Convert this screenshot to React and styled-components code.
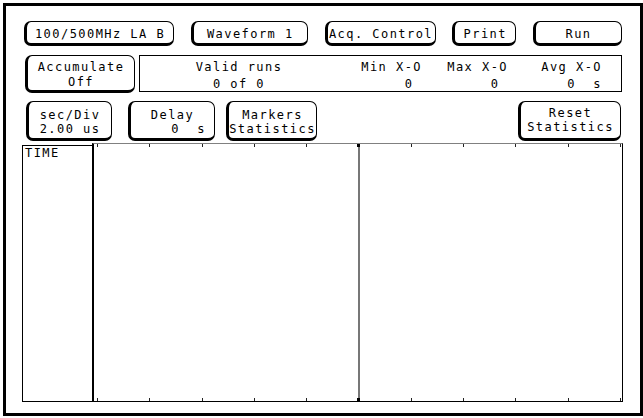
import React from "react";
import styled, { createGlobalStyle } from "styled-components";

const GlobalStyle = createGlobalStyle`
  html, body { margin: 0; padding: 0; background: #fff; }
  body { font-family: "DejaVu Sans Mono", "Liberation Mono", monospace; }
`;

const Screen = styled.div`
  box-sizing: border-box;
  margin: 3px 0 0 3px;
  width: 640px;
  height: 413px;
  border: 3px solid #000;
  background: #fff;
  padding: 15px 17px 0 16px;
  display: flex;
  flex-direction: column;
  font-family: "DejaVu Sans Mono", "Liberation Mono", monospace;
  font-size: 12px;
  line-height: 14px;
  letter-spacing: 1.45px;
  color: #000;
`;

const TopBar = styled.div`
  display: flex;
  justify-content: space-between;
  height: 25px;
  margin: 0 1px 0 2px;
`;

const StatusRow = styled.div`
  display: flex;
  gap: 4px;
  margin: 9px 1px 0 3px;
`;

const ScaleRow = styled.div`
  display: flex;
  margin: 8px 2px 0 4px;
`;

const Key = styled.div`
  box-sizing: border-box;
  flex: none;
  width: ${(p) => p.$w}px;
  height: ${(p) => p.$h}px;
  margin-left: ${(p) => (p.$ml === "auto" ? "auto" : `${p.$ml || 0}px`)};
  border: 1px solid #000;
  border-left-width: 3px;
  border-bottom-width: 3px;
  border-radius: 7px;
  display: flex;
  flex-direction: column;
  justify-content: center;
  padding-top: ${(p) => (p.$pt == null ? 3 : p.$pt)}px;
  line-height: ${(p) => p.$lh || 14}px;
  white-space: pre;
  text-align: center;
  background: #fff;
`;

const KeyLine = styled.span`
  display: block;
  text-align: ${(p) => p.$align || "center"};
  padding-right: ${(p) => (p.$align === "right" ? 8 : 0)}px;
`;

const Readout = styled.div`
  box-sizing: border-box;
  flex: 1;
  height: 37px;
  border: 1px solid #000;
  display: grid;
  grid-template-columns: 198px 84px 86px 94px;
  grid-auto-rows: 17px;
  align-content: start;
  padding-top: 3px;
  line-height: 17px;
  white-space: pre;
`;

const Cell = styled.div`
  text-align: ${(p) => p.$align || "right"};
`;

const Display = styled.div`
  display: flex;
  height: 259px;
  margin-top: 2px;
`;

const TimePanel = styled.div`
  box-sizing: border-box;
  width: 70px;
  margin-top: 2px;
  border: 1px solid #000;
  border-right: none;
  padding-left: 2px;
  line-height: 14px;
`;

const Plot = styled.div`
  box-sizing: border-box;
  flex: 1;
  border-left: 2px solid #000;
  border-top: 1px solid #808080;
  border-right: 1px solid #000;
  border-bottom: 1px solid #000;
  svg { display: block; }
`;

const ticks = Array.from({ length: 11 }, (_, i) => Math.round(3 + i * 52.3));

function Grid() {
  return (
    <svg width="528" height="257" viewBox="0 0 528 257">
      <rect x="264" y="0" width="2" height="257" fill="#777" />
      {ticks.map((x, i) =>
        i === 5 ? (
          <g key={x}>
            <rect x={263} y={0} width={3} height={3} fill="#000" />
            <rect x={263} y={254} width={3} height={3} fill="#000" />
          </g>
        ) : (
          <g key={x}>
            <rect x={x} y={0} width={1} height={3} fill="#222" />
            <rect x={x} y={254} width={1} height={3} fill="#222" />
          </g>
        )
      )}
    </svg>
  );
}

export default function App() {
  return (
    <>
      <GlobalStyle />
      <Screen>
        <TopBar>
          <Key $w={150} $h={25}>100/500MHz LA B</Key>
          <Key $w={117} $h={25}>Waveform 1</Key>
          <Key $w={111} $h={25}>Acq. Control</Key>
          <Key $w={64} $h={25}>Print</Key>
          <Key $w={89} $h={25}>Run</Key>
        </TopBar>
        <StatusRow>
          <Key $w={110} $h={38} $lh={15}>
            <KeyLine>Accumulate</KeyLine>
            <KeyLine>Off</KeyLine>
          </Key>
          <Readout>
            <Cell $align="center">Valid runs</Cell>
            <Cell>Min X-O</Cell>
            <Cell>Max X-O</Cell>
            <Cell>Avg X-O</Cell>
            <Cell $align="center">0 of 0</Cell>
            <Cell>{"0 "}</Cell>
            <Cell>{"0 "}</Cell>
            <Cell>{"0  s"}</Cell>
          </Readout>
        </StatusRow>
        <ScaleRow>
          <Key $w={86} $h={40} $pt={4}>
            <KeyLine>sec/Div</KeyLine>
            <KeyLine>2.00 us</KeyLine>
          </Key>
          <Key $w={87} $h={40} $pt={4} $ml={16}>
            <KeyLine>Delay</KeyLine>
            <KeyLine $align="right">{"0  s"}</KeyLine>
          </Key>
          <Key $w={91} $h={40} $pt={4} $ml={11}>
            <KeyLine>Markers</KeyLine>
            <KeyLine>Statistics</KeyLine>
          </Key>
          <Key $w={103} $h={40} $pt={0} $ml="auto">
            <KeyLine>Reset</KeyLine>
            <KeyLine>Statistics</KeyLine>
          </Key>
        </ScaleRow>
        <Display>
          <TimePanel>TIME</TimePanel>
          <Plot>
            <Grid />
          </Plot>
        </Display>
      </Screen>
    </>
  );
}
